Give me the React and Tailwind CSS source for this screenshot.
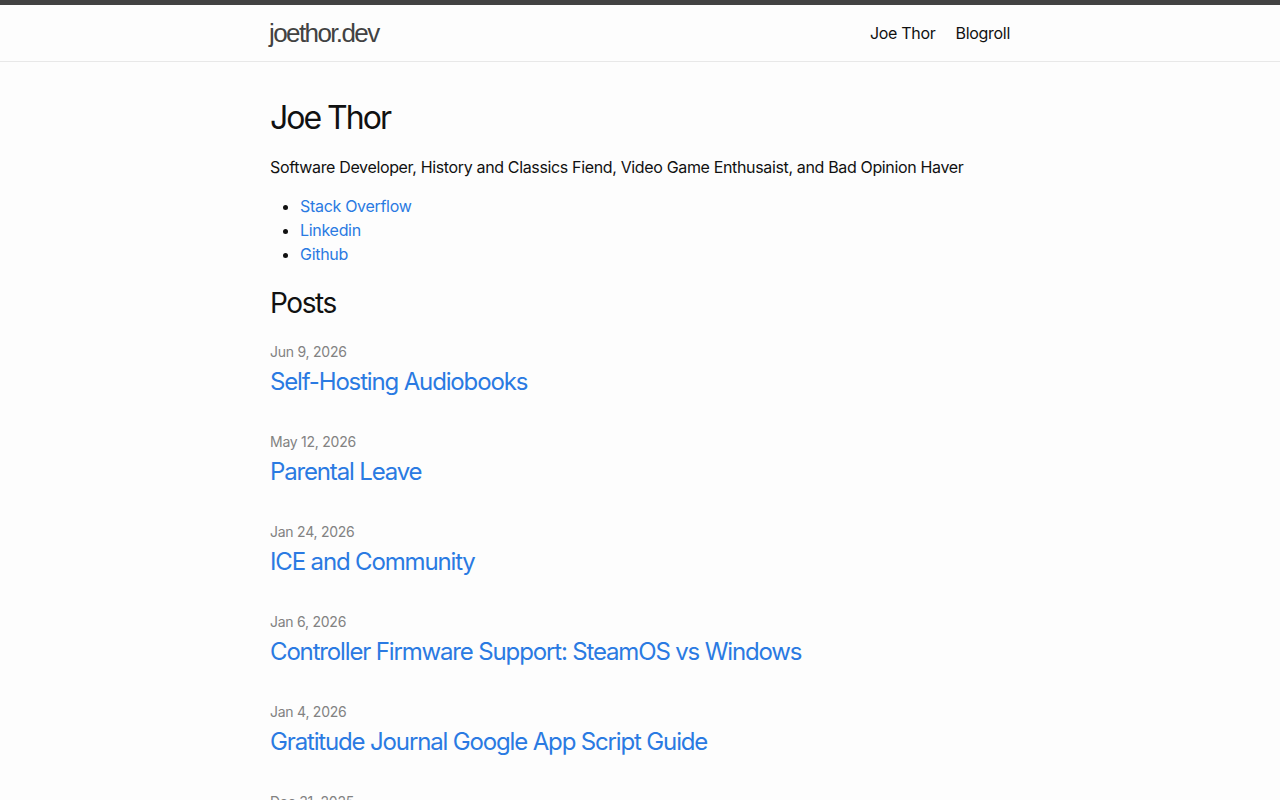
export default function App() {
  const posts = [
    ["Jun 9, 2026", "Self-Hosting Audiobooks"],
    ["May 12, 2026", "Parental Leave"],
    ["Jan 24, 2026", "ICE and Community"],
    ["Jan 6, 2026", "Controller Firmware Support: SteamOS vs Windows"],
    ["Jan 4, 2026", "Gratitude Journal Google App Script Guide"],
    ["Dec 31, 2025", "Year in Review"],
  ];
  return (
    <div className="min-h-screen bg-[#fdfdfd] text-[#111] text-[16px] leading-[24px]" style={{ fontFamily: "Inter, 'Noto Sans', sans-serif" }}>
      <header className="border-t-[5px] border-t-[#424242] border-b border-b-[#e8e8e8] min-h-[56px]">
        <div className="w-[740px] mx-auto flex justify-between items-center h-[56px]">
          <a className="text-[26px] leading-[54px] tracking-[-1.6px] font-light text-[#424242] -ml-[1px]" style={{ fontFamily: "'Liberation Sans', Arial, sans-serif" }}>joethor.dev</a>
          <nav className="flex leading-[54px] text-[16px] text-[#111] tracking-[-0.3px]">
            <a className="mr-[20px]">Joe Thor</a>
            <a>Blogroll</a>
          </nav>
        </div>
      </header>
      <main className="w-[740px] mx-auto pt-[32px]">
        <h1 className="text-[32px] leading-[48px] mb-[13px] tracking-[-2px]">Joe Thor</h1>
        <p className="mb-[15px] tracking-[-0.35px]">Software Developer, History and Classics Fiend, Video Game Enthusaist, and Bad Opinion Haver</p>
        <ul className="list-disc ml-[30px] mb-[15px] text-[#2a7ae2] tracking-[-0.3px]">
          <li className="marker:text-[#111]"><a>Stack Overflow</a></li>
          <li className="marker:text-[#111]"><a>Linkedin</a></li>
          <li className="marker:text-[#111]"><a>Github</a></li>
        </ul>
        <h2 className="text-[28px] leading-[42px] mb-[16px] pt-[1px] tracking-[-1.4px]">Posts</h2>
        <ul>
          {posts.map(([d, t]) => (
            <li key={t} className="mb-[30px]">
              <div className="text-[14px] leading-[24px] text-[#828282] tracking-[-0.25px]">{d}</div>
              <h3 className="text-[24px] leading-[36px] tracking-[-1.15px]"><a className="text-[#2a7ae2]">{t}</a></h3>
            </li>
          ))}
        </ul>
      </main>
    </div>
  );
}
